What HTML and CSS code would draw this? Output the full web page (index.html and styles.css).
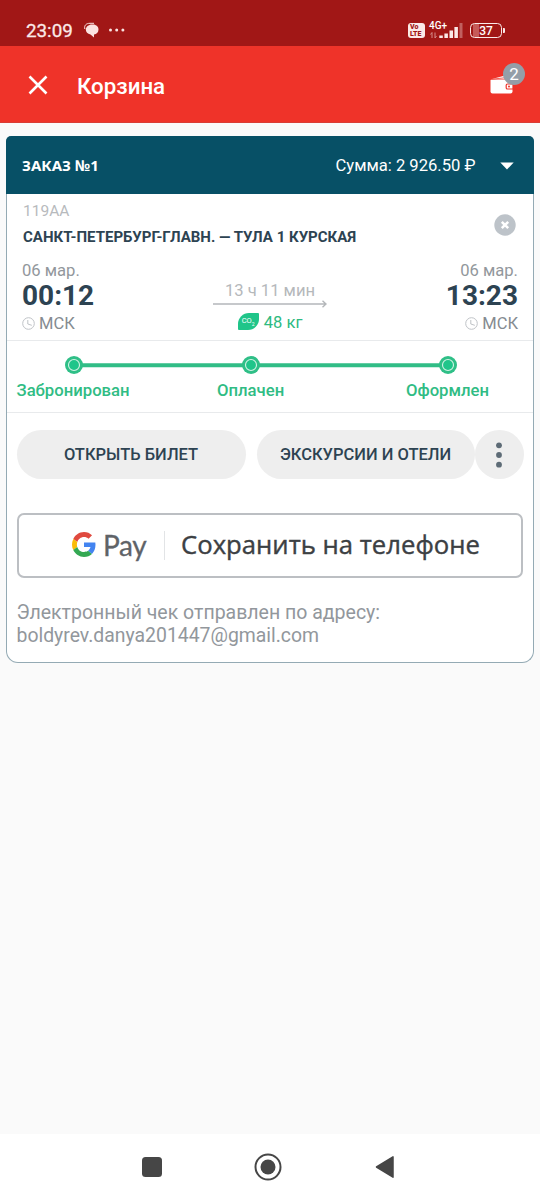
FILE: index.html
```html
<!DOCTYPE html>
<html lang="ru">
<head>
<meta charset="utf-8">
<title>Корзина</title>
<link rel="stylesheet" href="styles.css">
</head>
<body>
<div class="statusbar">
  <span class="clock">23:09</span>
  <svg class="notice" width="44" height="18" viewBox="0 0 44 18"><path d="M.8 7C0 3.500 2 1.300 6 1.300H10" fill="none" stroke="#fbe3e1" stroke-width="1"/><path d="M8 2.500C12 2 14.500 4.500 14.500 7.500C14.500 10.500 12.500 12 10 12.500V15.500L6.500 12.500C3.500 12 1.800 10 1.800 7.500C1.800 5 4.500 2.500 8 2.500Z" fill="#fbe3e1"/><g fill="#fbe3e1"><circle cx="26.500" cy="8" r="1.500"/><circle cx="32.700" cy="8" r="1.500"/><circle cx="38.900" cy="8" r="1.500"/></g></svg>
  <span class="volte"><b>Vo</b><b>LTE</b></span>
  <span class="network"><span class="net-type">4G+</span>
    <svg width="34" height="17" viewBox="0 0 34 17"><g fill="#fbe9e8"><path d="M10.300 12.500h3.500v2.500h-3.500zM15.400 10.500h3.500V15h-3.500zM20.500 7.500h3.500V15h-3.500zM25.400 4h3.500v11h-3.500z"/><path d="M30.500 0h3v15h-3z" opacity=".35"/></g><path d="M3 15V9.500l-1.500 2M6 9.500V15l1.500-2" fill="none" stroke="#d58c8a"/></svg>
  </span>
  <span class="battery"><span>37</span></span><span class="battery-tip"></span>
</div>
<header class="appbar">
  <svg class="close" width="20" height="20" viewBox="0 0 20 20"><path d="M1.500 1.500l17 17M18.500 1.500l-17 17" stroke="#fff" stroke-width="2.600"/></svg>
  <h1>Корзина</h1>
  <div class="cart">
    <svg width="24" height="20" viewBox="0 0 24 20"><path d="M2 4L17 0V4Z" fill="#fff"/><path d="M2 4.500H20.500Q22.500 4.500 22.500 6.500V16.500Q22.500 18.500 20.500 18.500H2.500Q.5 18.500 .5 16.500V5Z" fill="#fff"/><path d="M1.500 4.200L16 2.700" stroke="#ef3329" stroke-width=".8"/><path d="M23 9h-5.500q-1.300 0-1.300 1.300v2.400q0 1.300 1.300 1.300H23z" fill="#fff" stroke="#ef3329" stroke-width="1.200"/><circle cx="19" cy="11.500" r="1" fill="#ef3329"/></svg>
    <span class="badge">2</span>
  </div>
</header>
<main class="content">
  <section class="card">
    <div class="order">
      <span class="order-title">ЗАКАЗ №1</span>
      <span class="order-sum">Сумма: 2 926.50 ₽</span>
      <svg width="14" height="8" viewBox="0 0 14 8"><path d="M.3.500H13.700L7 7.500Z" fill="#fff"/></svg>
    </div>
    <div class="ticket">
      <div class="route">
        <div><div class="train">119АА</div><div class="stations">САНКТ-ПЕТЕРБУРГ-ГЛАВН. — ТУЛА 1 КУРСКАЯ</div></div>
        <svg width="22" height="22" viewBox="0 0 22 22"><circle cx="11" cy="11" r="10.700" fill="#bdc3c9"/><path d="M7.800 7.800l6.400 6.400M14.200 7.800l-6.400 6.400" stroke="#fff" stroke-width="2.500"/></svg>
      </div>
      <div class="trip">
        <div class="point">
          <div class="date">06 мар.</div><div class="time">00:12</div>
          <div class="zone"><svg width="13" height="13" viewBox="0 0 13 13" fill="none" stroke="#bfc3c7"><circle cx="6.500" cy="6.500" r="5.800"/><path d="M5.800 3v4l4 1.300"/></svg><span>МСК</span></div>
        </div>
        <div class="duration">
          <div class="hours">13 ч 11 мин</div>
          <svg class="arrow" width="114" height="8" viewBox="0 0 114 8" fill="none" stroke="#b4b7ba" stroke-width="1.400"><path d="M0 4H113M109.500.7L113 4L109.500 7.300"/></svg>
          <div class="eco"><span class="leaf">CO<sub>2</sub></span><span class="eco-text">48 кг</span></div>
        </div>
        <div class="point end">
          <div class="date">06 мар.</div><div class="time">13:23</div>
          <div class="zone"><svg width="13" height="13" viewBox="0 0 13 13" fill="none" stroke="#bfc3c7"><circle cx="6.500" cy="6.500" r="5.800"/><path d="M5.800 3v4l4 1.300"/></svg><span>МСК</span></div>
        </div>
      </div>
    </div>
    <div class="progress">
      <svg width="393" height="18" viewBox="0 0 393 18"><path d="M9 9.200H383" stroke="#31bd86" stroke-width="4"/><g fill="#2fbf87"><circle cx="9" cy="9" r="9"/><circle cx="186" cy="9" r="9"/><circle cx="383" cy="9" r="9"/></g><g fill="#20c58a" stroke="#d4f3e6" stroke-width="1.100"><circle cx="9" cy="9" r="5.500"/><circle cx="186" cy="9" r="5.500"/><circle cx="383" cy="9" r="5.500"/></g></svg>
      <div class="steps"><span class="s1">Забронирован</span><span class="s2">Оплачен</span><span class="s3">Оформлен</span></div>
    </div>
    <div class="actions">
      <div class="btn open"><span>ОТКРЫТЬ БИЛЕТ</span></div>
      <div class="btn tours"><span>ЭКСКУРСИИ И ОТЕЛИ</span></div>
      <div class="btn more"><svg width="6" height="26" viewBox="0 0 6 26" fill="#5d6b76"><circle cx="3" cy="3.300" r="2.900"/><circle cx="3" cy="13" r="2.900"/><circle cx="3" cy="22.700" r="2.900"/></svg></div>
    </div>
    <div class="gpay">
      <svg width="24" height="25" viewBox="0 0 48 48" preserveAspectRatio="none"><path fill="#e04a3f" d="M24 9.500c3.540 0 6.710 1.220 9.210 3.600l6.850-6.850C35.900 2.380 30.470 0 24 0 14.620 0 6.510 5.380 2.560 13.220l7.980 6.190C12.430 13.720 17.740 9.500 24 9.500z"/><path fill="#4384f0" d="M46.980 24.550c0-1.570-.15-3.090-.38-4.550H24v9.020h12.940c-.58 2.960-2.260 5.480-4.780 7.180l7.730 6c4.510-4.180 7.090-10.360 7.090-17.650z"/><path fill="#fbbc05" d="M10.530 28.590c-.48-1.450-.76-2.990-.76-4.590s.27-3.140.76-4.590l-7.980-6.190C.92 16.460 0 20.120 0 24c0 3.880.92 7.540 2.560 10.780z"/><path fill="#34a853" d="M24 48c6.480 0 11.930-2.130 15.890-5.810l-7.730-6c-2.150 1.450-4.920 2.300-8.160 2.300-6.260 0-11.570-4.220-13.470-9.910l-7.980 6.190C6.510 42.620 14.620 48 24 48z"/></svg>
      <span class="pay">Pay</span><span class="rule"></span><span class="save">Сохранить на телефоне</span>
    </div>
    <div class="receipt"><div class="r1">Электронный чек отправлен по адресу:</div><div class="r2">boldyrev.danya201447@gmail.com</div></div>
  </section>
</main>
<nav class="navbar">
  <svg width="20" height="20"><rect width="20" height="20" rx="3.500" fill="#464646"/></svg>
  <svg width="28" height="28" viewBox="0 0 28 28"><circle cx="14" cy="14" r="12.500" fill="none" stroke="#464646" stroke-width="2"/><circle cx="14" cy="14" r="7.500" fill="#464646"/></svg>
  <svg width="20" height="24" viewBox="0 0 20 24"><path d="M1.500 12L18 1.800V22.200Z" fill="#464646" stroke="#464646" stroke-width="1.500" stroke-linejoin="round"/></svg>
</nav>
</body>
</html>
```

FILE: styles.css
```css
* { box-sizing: border-box; }
body { margin: 0; width: 540px; height: 1200px; display: flex; flex-direction: column; background: #fafafa; font-family: Roboto, "Noto Sans", sans-serif; color: #2d4352; overflow: hidden; }
svg { display: block; flex: none; }
span, div { white-space: nowrap; }
.statusbar { height: 46px; flex: none; background: #a11716; display: flex; align-items: flex-start; padding: 20px 0 0 26px; color: #fff; }
.clock { font-size: 18.8px; line-height: 23px; width: 58px; color: #fbe9e8; -webkit-text-stroke: .3px #fbe9e8; }
.notice { margin-top: 2px; }
.volte { margin: 3px 0 0 280px; width: 17px; height: 15px; background: #fbeae9; border-radius: 3px; color: #a11716; font-size: 7px; line-height: 6.5px; padding: 1px 0 0 2px; display: flex; flex-direction: column; }
.volte b { font-weight: 900; }
.network { margin-left: 4px; width: 34px; height: 20px; position: relative; padding-top: 3px; }
.net-type { position: absolute; left: 0; top: 0; font-size: 10px; line-height: 11px; font-weight: 500; }
.battery { margin: 3px 0 0 7px; width: 32px; height: 15px; border: 1.5px solid #fbe9e8; border-radius: 4.5px; display: flex; justify-content: center; align-items: center; font-size: 12px; font-weight: 500; background: linear-gradient(90deg, transparent 2px, #c65a58 2px, #c65a58 8px, transparent 8px); }
.battery-tip { width: 2px; height: 5px; background: #fbe9e8; margin: 8px 0 0 1px; border-radius: 0 1px 1px 0; }
.appbar { height: 77px; flex: none; background: #ef3329; display: flex; align-items: center; padding: 2px 15px 0 28px; border-bottom: 1px solid #d93d35; }
.appbar h1 { margin: 1px 0 0 29px; font-size: 22.3px; line-height: 28px; font-weight: 500; color: #fff; }
.cart { margin-left: auto; position: relative; width: 35px; height: 20px; }
.badge { position: absolute; left: 13px; top: -12px; width: 22px; height: 22px; border-radius: 50%; background: #949ea8; color: #fff; font-size: 17px; line-height: 23px; text-align: center; }
.content { flex: 1; padding: 13px 6px 0; }
.card { height: 527px; border: 1px solid #94aab4; border-top: 0; border-radius: 6px 6px 12px 12px; background: #fff; }
.order { height: 58px; margin: 0 -1px; background: #075066; border-radius: 5px 5px 0 0; display: flex; align-items: center; padding: 0 20px 0 16px; color: #fff; }
.order-title { font-family: "Noto Sans", sans-serif; font-size: 15px; font-weight: 700; }
.order-sum { margin-left: auto; margin-right: 24.5px; font-size: 16.6px; padding-top: 1px; }
.order > svg { margin-top: 1px; }
.ticket { height: 147px; padding: 5px 15px 0; border-bottom: 1px solid #e8eaec; }
.route { display: flex; justify-content: space-between; padding: 0 2px 0 1px; height: 61px; }
.route > svg { margin-top: 15px; }
.train { color: #b7babd; font-size: 15.500px; line-height: 24px; }
.stations { font-size: 15px; line-height: 28px; font-weight: 700; }
.trip { display: flex; justify-content: space-between; }
.date { font-size: 16.6px; line-height: 22px; color: #92979c; }
.time { font-size: 28px; line-height: 29px; font-weight: 700; margin-top: -1px; }
.zone { display: flex; align-items: center; gap: 4px; font-size: 16.500px; line-height: 25px; color: #858b91; margin-top: 1px; }
.zone svg { margin-bottom: 1px; }
.point { width: 76px; }
.point.end { text-align: right; }
.end .zone { justify-content: flex-end; }
.duration { display: flex; flex-direction: column; align-items: center; padding-top: 20px; }
.hours { font-size: 16.6px; line-height: 22px; color: #b5b8bb; }
.arrow { margin-top: -2px; }
.eco { display: flex; align-items: center; gap: 5px; margin-top: 3px; }
.leaf { width: 21px; height: 17px; background: #20c589; border-radius: 11px 1px 11px 1px; color: #fff; font-size: 7.5px; line-height: 16px; text-align: center; margin-bottom: 2px; }
.leaf sub { font-size: 5px; line-height: 0; }
.eco-text { color: #2eba81; font-size: 16.6px; line-height: 23px; }
.progress { height: 72px; border-bottom: 1px solid #e8eaec; padding: 15px 9.5px 0; }
.progress > svg { margin-left: 48px; }
.steps { display: flex; color: #30bc84; font-size: 16.7px; line-height: 24px; font-weight: 500; margin-top: 5px; }
.s1 { width: 200.500px; } .s2 { width: 189px; }
.actions { display: flex; padding: 17px 9.5px 0; }
.btn { height: 49px; border-radius: 25px; background: #eee; display: flex; justify-content: center; align-items: center; font-size: 16.5px; font-weight: 500; }
.open { width: 229px; margin-right: 11px; } .tours { width: 218px; } .more { width: 49px; }
.gpay { margin: 34px 10px 0 9.5px; height: 65px; border: 2px solid #bcbfc3; border-radius: 7px; display: flex; align-items: center; padding-left: 53.5px; }
.gpay > svg { margin-bottom: 3px; }
.pay { margin: -2px 0 0 7px; width: 61px; font-size: 28px; letter-spacing: -.3px; color: #5f6368; font-family: Lato, sans-serif; -webkit-text-stroke: .3px #5f6368; }
.rule { width: 1px; height: 29px; background: #e2e4e6; margin-right: 16px; }
.save { font-family: "Open Sans", sans-serif; font-size: 25.7px; color: #3c4043; -webkit-text-stroke: .4px #3c4043; margin-top: -2px; }
.receipt { padding: 23px 9.5px 0; font-size: 19.5px; line-height: 23px; color: #92979c; }
.r2 { font-size: 19.4px; }
.navbar { height: 66px; flex: none; background: #fff; display: flex; align-items: center; padding-left: 142px; }
.navbar svg:nth-child(2) { margin-left: 92px; }
.navbar svg:nth-child(3) { margin-left: 93px; }
```
